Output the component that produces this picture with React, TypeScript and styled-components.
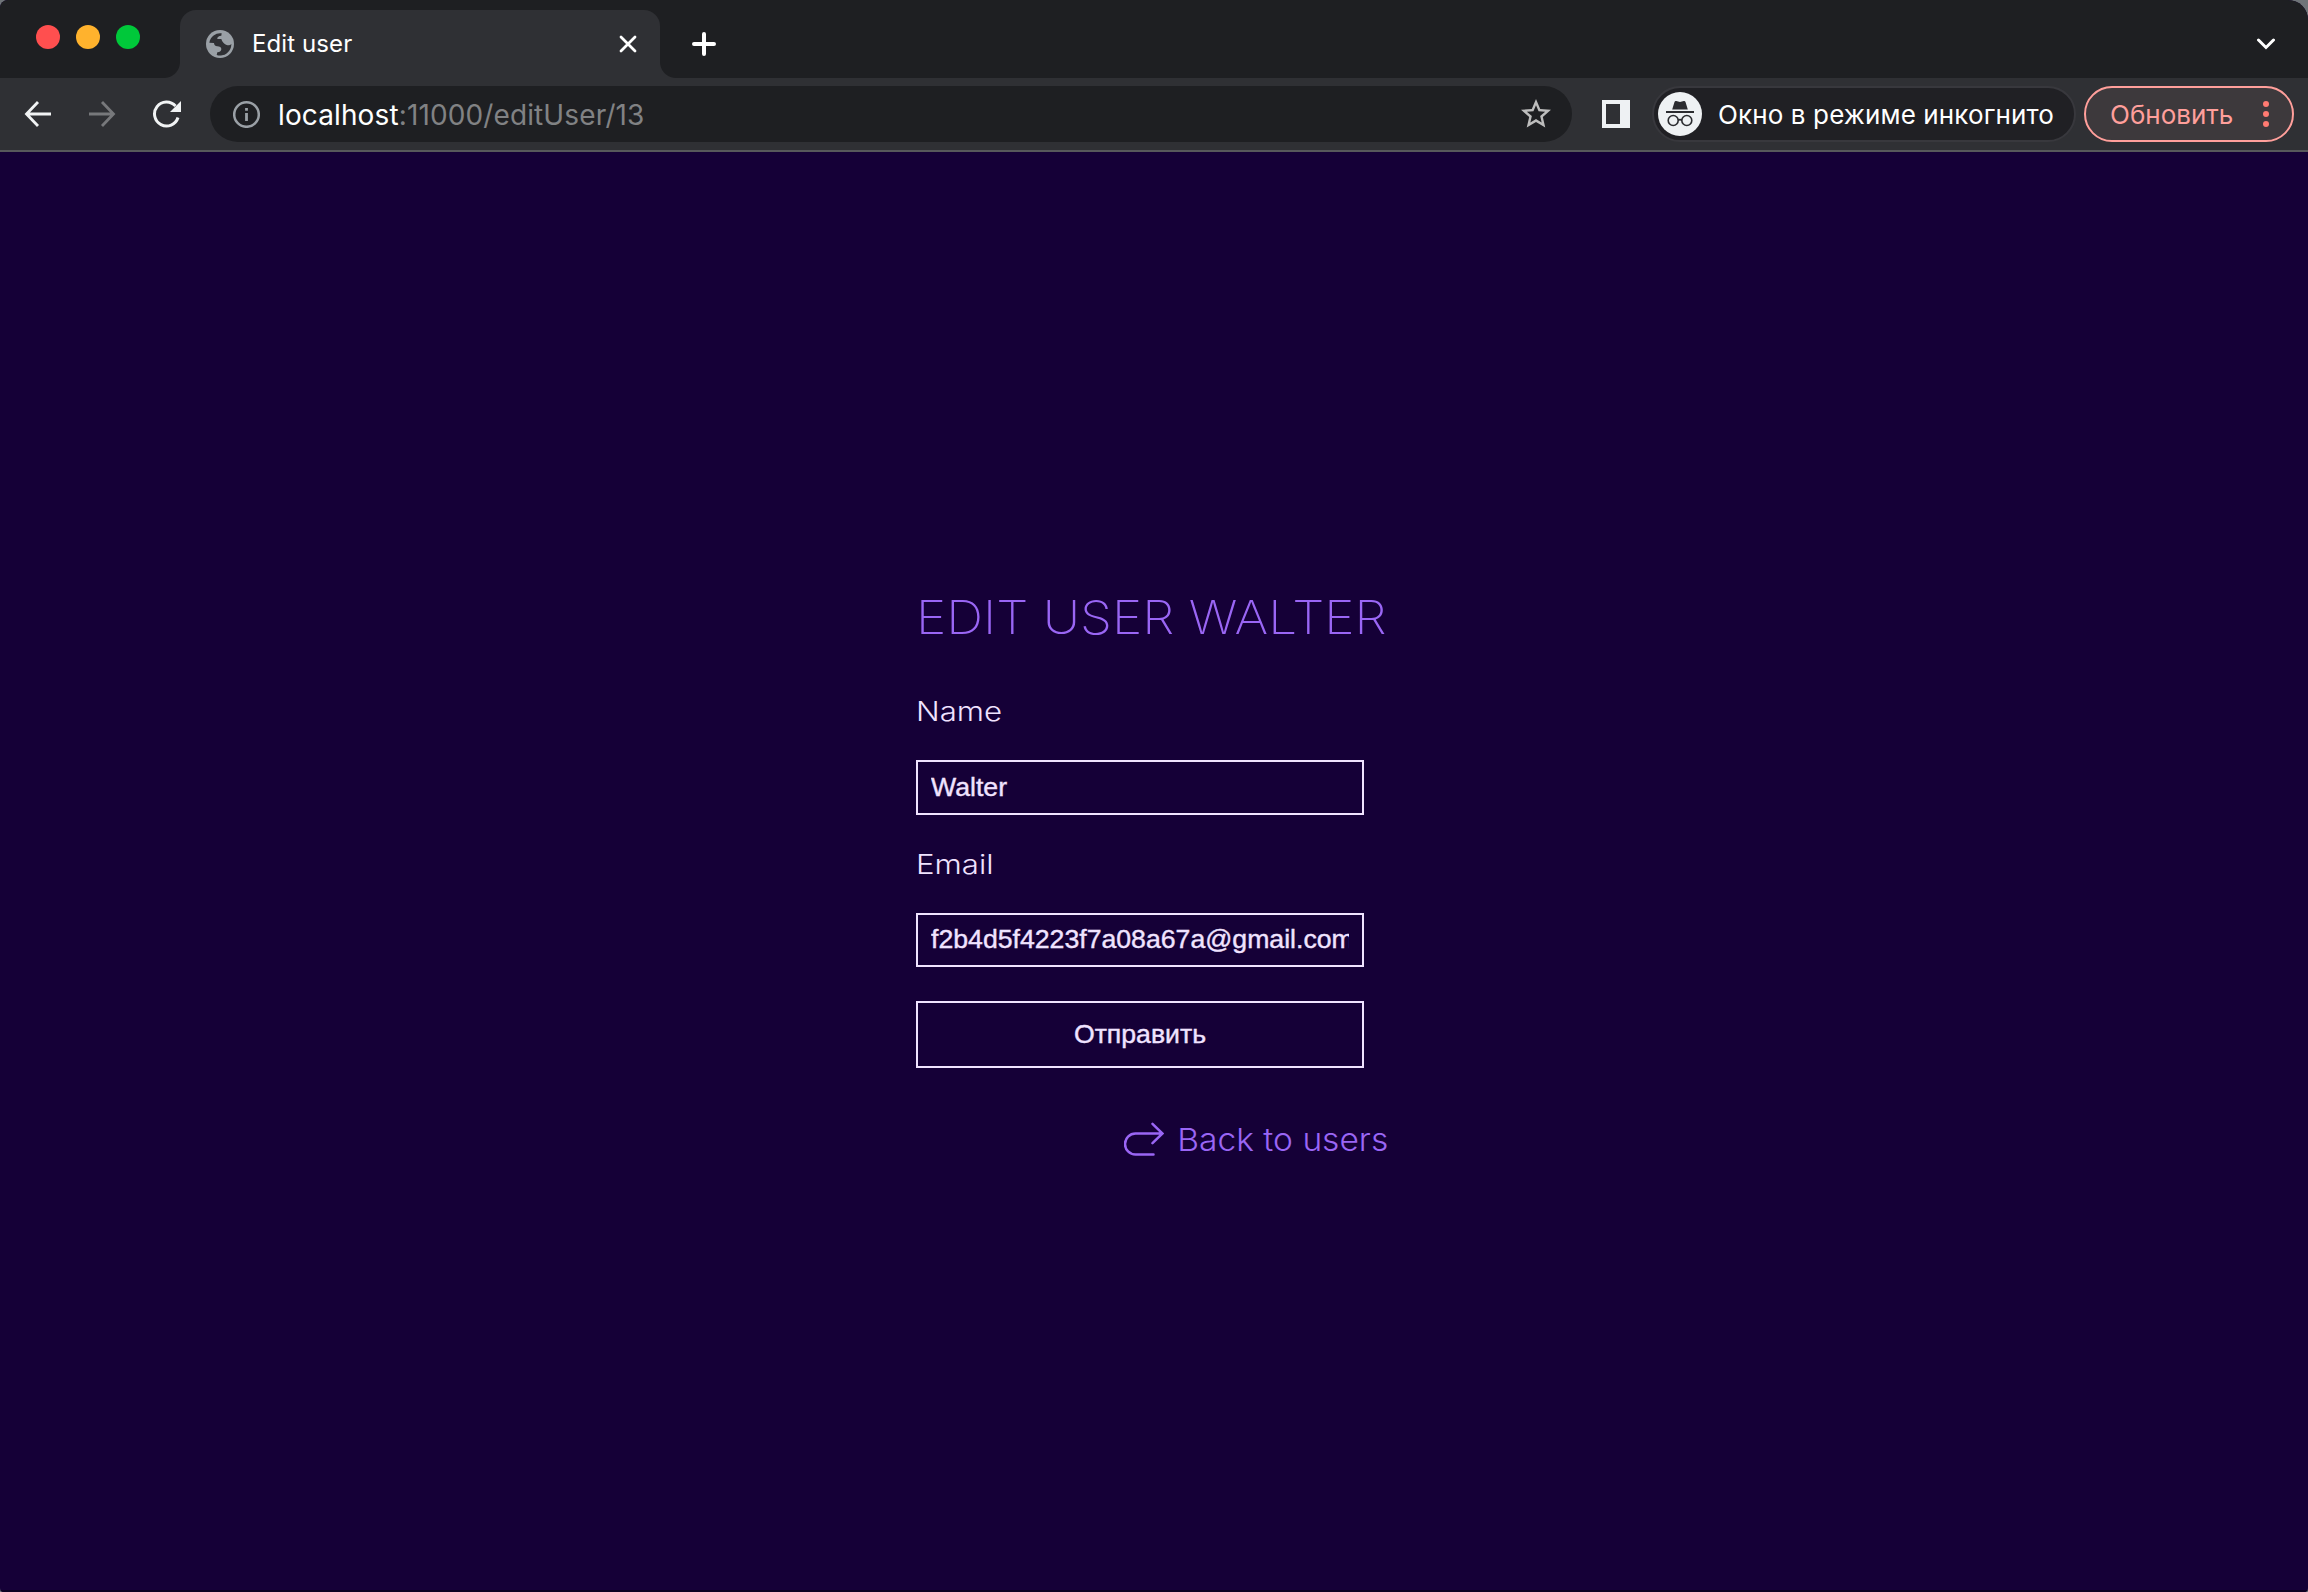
import React from "react";
import styled, { createGlobalStyle } from "styled-components";

const GlobalStyle = createGlobalStyle`
  * { box-sizing: border-box; }
  html { background: #6f7478; }
  body { margin: 0; overflow: hidden; }
  svg { display: block; flex: none; }
`;

const Window = styled.div`
  width: 2308px;
  height: 1592px;
  display: flex;
  flex-direction: column;
  border-radius: 8px 20px 4px 4px;
  overflow: hidden;
  background: #150037;
  font-family: Inter, "Liberation Sans", sans-serif;
`;

const TabStrip = styled.header`
  height: 78px;
  display: flex;
  align-items: flex-end;
  background: #1e1f22;
`;

const Lights = styled.div`
  width: 180px;
  height: 78px;
  padding: 25px 0 0 36px;
  display: flex;
  gap: 16px;
`;

const Light = styled.span<{ $color: string }>`
  width: 24px;
  height: 24px;
  border-radius: 50%;
  background: ${(p) => p.$color};
`;

const Tab = styled.div`
  position: relative;
  width: 480px;
  height: 68px;
  padding: 0 22px 0 26px;
  display: flex;
  align-items: center;
  border-radius: 16px 16px 0 0;
  background: #2f3034;
  color: #fff;
  &::before,
  &::after {
    content: "";
    position: absolute;
    bottom: 0;
    width: 16px;
    height: 16px;
  }
  &::before {
    left: -16px;
    background: radial-gradient(circle at 0 0, #1e1f22 15.5px, #2f3034 16.5px);
  }
  &::after {
    right: -16px;
    background: radial-gradient(circle at 100% 0, #1e1f22 15.5px, #2f3034 16.5px);
  }
`;

const TabTitle = styled.span`
  flex: 1;
  margin-left: 18px;
  font-size: 24px;
  line-height: 32px;
  letter-spacing: 0.1px;
`;

const NewTab = styled.div`
  height: 68px;
  margin-left: 32px;
  display: flex;
  align-items: center;
`;

const TabMenu = styled(NewTab)`
  margin: 0 32px 0 auto;
`;

const Toolbar = styled.nav`
  height: 74px;
  padding: 8px 14px 8px 24px;
  display: flex;
  align-items: center;
  background: #2f3034;
  border-bottom: 2px solid #57585b;
`;

const NavButtons = styled.div`
  width: 186px;
  display: flex;
  gap: 36px;
`;

const AddressBar = styled.div`
  width: 1362px;
  height: 56px;
  padding: 0 18px 0 22px;
  display: flex;
  align-items: center;
  border-radius: 28px;
  background: #1e1f22;
`;

const Url = styled.span`
  flex: 1;
  margin: 1px 0 0 18px;
  color: #818284;
  font-size: 28px;
  line-height: 36px;
  letter-spacing: 0.12px;
`;

const Host = styled.span`
  color: #fff;
`;

const PanelButton = styled.div`
  width: 80px;
  padding-left: 30px;
`;

const Incognito = styled.div`
  width: 424px;
  height: 56px;
  padding-left: 4px;
  display: flex;
  align-items: center;
  gap: 16px;
  border: 2px solid #38383d;
  border-radius: 28px;
  background: #202024;
  color: #fff;
  font-size: 26px;
  letter-spacing: 0.12px;
  white-space: nowrap;
`;

const Update = styled.div`
  width: 210px;
  height: 56px;
  margin-left: 8px;
  padding: 0 23px 0 24px;
  display: flex;
  align-items: center;
  justify-content: space-between;
  border: 2px solid #ff9f9b;
  border-radius: 28px;
  background: #3d393c;
  color: #ff9f9b;
  font-size: 26px;
`;

const Page = styled.main`
  flex: 1;
  display: flex;
  justify-content: center;
  padding-top: 435px;
  border-bottom: 2px solid #0d0022;
  font-family: Inter, "Open Sans", sans-serif;
  font-weight: 300;
`;

const Form = styled.form`
  width: 476px;
  display: flex;
  flex-direction: column;
  align-items: flex-start;
`;

const Title = styled.h1`
  height: 60px;
  margin: 0 0 48px;
  color: #9a66f5;
  font-size: 46.5px;
  font-weight: 250;
  line-height: 60px;
  white-space: nowrap;
  transform: scaleX(1.104);
  transform-origin: left;
`;

const Label = styled.label`
  height: 34px;
  margin-bottom: 31px;
  color: #f0e3ff;
  font-size: 27px;
  font-weight: 320;
  line-height: 34px;
  transform: scaleX(1.155);
  transform-origin: left;
`;

const Input = styled.input<{ $height: number }>`
  width: 448px;
  height: ${(p) => p.$height}px;
  margin: 0 0 33px;
  padding: 0 13px;
  border: 2px solid #f0e3ff;
  border-radius: 0;
  outline: none;
  background: transparent;
  color: #f0e3ff;
  font: 400 26.667px "Liberation Sans", Arial, sans-serif;
  -webkit-text-stroke: 0.4px #f0e3ff;
`;

const EmailInput = styled(Input)`
  padding-bottom: 2px;
`;

const Submit = styled.button`
  width: 448px;
  height: 67px;
  margin: 1px 0 0;
  padding: 0 0 1px;
  border: 2px solid #f0e3ff;
  background: transparent;
  color: #f0e3ff;
  font: 400 26.667px "Liberation Sans", Arial, sans-serif;
  -webkit-text-stroke: 0.4px #f0e3ff;
`;

const BackLink = styled.a`
  height: 40px;
  margin: 52px 4px 0 auto;
  display: flex;
  align-items: center;
  gap: 26px;
  color: #9a66f5;
  font-size: 31.5px;
  line-height: 40px;
  white-space: nowrap;
  svg {
    margin-bottom: 2px;
  }
`;

const BackText = styled.span`
  transform: scaleX(1.064);
  transform-origin: right;
`;

const GlobeIcon = () => (
  <svg width="28" height="28" viewBox="0 0 84 84">
    <circle cx="42" cy="42" r="42" fill="#9aa0a6" />
    <path
      d="M10 38A33 33 0 0 1 47 10L46 17Q33 18 34 27L46 27Q50 40 60 44Q72 49 76 41A34 34 0 0 1 32 75L34 67Q46 66 46 57Q45 49 34 49Q24 48 24 39Z"
      fill="#2f3034"
    />
  </svg>
);

const CloseIcon = () => (
  <svg width="20" height="20" viewBox="0 0 20 20" stroke="#fff" strokeWidth="2.800" strokeLinecap="round">
    <path d="M3 3l14 14M17 3L3 17" />
  </svg>
);

const PlusIcon = () => (
  <svg width="24" height="24" viewBox="0 0 24 24" stroke="#fff" strokeWidth="4" strokeLinecap="round">
    <path d="M12 2v20M2 12h20" />
  </svg>
);

const ChevronIcon = () => (
  <svg width="20" height="12" viewBox="0 0 20 12" fill="none" stroke="#fff" strokeWidth="3" strokeLinecap="round">
    <path d="M2.500 2l7.500 7.500L17.500 2" />
  </svg>
);

const ArrowIcon = ({ color, flip }: { color: string; flip?: boolean }) => (
  <svg width="28" height="28" viewBox="0 0 28 28" fill="none" stroke={color} strokeWidth="2.800">
    <path
      d="M14 2L2.500 14L14 26M3 14h24"
      transform={flip ? "translate(28 0) scale(-1 1)" : undefined}
    />
  </svg>
);

const ReloadIcon = () => (
  <svg width="29" height="28" viewBox="-1 0 29 28" fill="none">
    <path d="M25 17.500A12 12 0 1 1 22.500 6" stroke="#f1f3f4" strokeWidth="3" />
    <path d="M28 1v11H17z" fill="#f1f3f4" />
  </svg>
);

const InfoIcon = () => (
  <svg width="28" height="28" viewBox="0 0 28 28" fill="none">
    <circle cx="14.500" cy="14.500" r="12.300" stroke="#9aa0a6" strokeWidth="2.500" />
    <path d="M13.100 8h2.800v2.800h-2.800zM13.100 13h2.800v8h-2.800z" fill="#9aa0a6" />
  </svg>
);

const StarIcon = () => (
  <svg width="36" height="36" viewBox="0 0 24 24" fill="#bdbdbd">
    <path d="M22 9.240l-7.190-.620L12 2 9.190 8.630 2 9.240l5.460 4.730L5.820 21 12 17.270 18.180 21l-1.630-7.030L22 9.240zM12 15.400l-3.760 2.270 1-4.280-3.320-2.880 4.380-.380L12 6.100l1.710 4.040 4.380.380-3.320 2.880 1 4.280L12 15.400z" />
  </svg>
);

const SidePanelIcon = () => (
  <svg width="28" height="28" viewBox="0 0 28 28">
    <path d="M0 0h28v28H0zM4 4v20h14V4z" fill="#eef1f3" fillRule="evenodd" />
  </svg>
);

const IncognitoIcon = () => (
  <svg width="44" height="44" viewBox="0 0 44 44" fill="none">
    <circle cx="22" cy="22" r="22" fill="#eef1f3" />
    <path d="M14.200 17.500l2.300-7.500q.5-1.200 1.700-.9l3.800.8 3.800-.8q1.200-.3 1.700.9l2.300 7.500z" fill="#2b2c30" />
    <path d="M8 20h28" stroke="#2b2c30" strokeWidth="2" />
    <circle cx="15.200" cy="28.500" r="5" stroke="#2b2c30" strokeWidth="1.600" />
    <circle cx="28.800" cy="28.500" r="5" stroke="#2b2c30" strokeWidth="1.600" />
    <path d="M20 28.200q2-1.200 4 0" stroke="#2b2c30" strokeWidth="1.600" />
  </svg>
);

const DotsIcon = () => (
  <svg width="6" height="26" viewBox="0 0 6 26" fill="#ff7b72">
    <circle cx="3" cy="3" r="3" />
    <circle cx="3" cy="13" r="3" />
    <circle cx="3" cy="23" r="3" />
  </svg>
);

const RedoIcon = () => (
  <svg width="40" height="34" viewBox="0 0 40 34" fill="none" stroke="#9a66f5" strokeWidth="2.500" strokeLinecap="round">
    <path d="M38 11.500H11.500a10.500 10.500 0 0 0 0 21H29.500M28.500 1.800l10 9.700-10 9.700" />
  </svg>
);

export default function App() {
  return (
    <Window>
      <GlobalStyle />
      <TabStrip>
        <Lights>
          <Light $color="#ff4f4f" />
          <Light $color="#ffb22d" />
          <Light $color="#00c83a" />
        </Lights>
        <Tab>
          <GlobeIcon />
          <TabTitle>Edit user</TabTitle>
          <CloseIcon />
        </Tab>
        <NewTab>
          <PlusIcon />
        </NewTab>
        <TabMenu>
          <ChevronIcon />
        </TabMenu>
      </TabStrip>
      <Toolbar>
        <NavButtons>
          <ArrowIcon color="#f1f3f4" />
          <ArrowIcon color="#77787b" flip />
          <ReloadIcon />
        </NavButtons>
        <AddressBar>
          <InfoIcon />
          <Url>
            <Host>localhost</Host>:11000/editUser/13
          </Url>
          <StarIcon />
        </AddressBar>
        <PanelButton>
          <SidePanelIcon />
        </PanelButton>
        <Incognito>
          <IncognitoIcon />
          Окно в режиме инкогнито
        </Incognito>
        <Update>
          Обновить
          <DotsIcon />
        </Update>
      </Toolbar>
      <Page>
        <Form onSubmit={(e) => e.preventDefault()}>
          <Title>EDIT USER WALTER</Title>
          <Label htmlFor="name">Name</Label>
          <Input id="name" $height={55} defaultValue="Walter" />
          <Label htmlFor="email">Email</Label>
          <EmailInput id="email" $height={54} defaultValue="f2b4d5f4223f7a08a67a@gmail.com" />
          <Submit type="submit">Отправить</Submit>
          <BackLink>
            <RedoIcon />
            <BackText>Back to users</BackText>
          </BackLink>
        </Form>
      </Page>
    </Window>
  );
}
